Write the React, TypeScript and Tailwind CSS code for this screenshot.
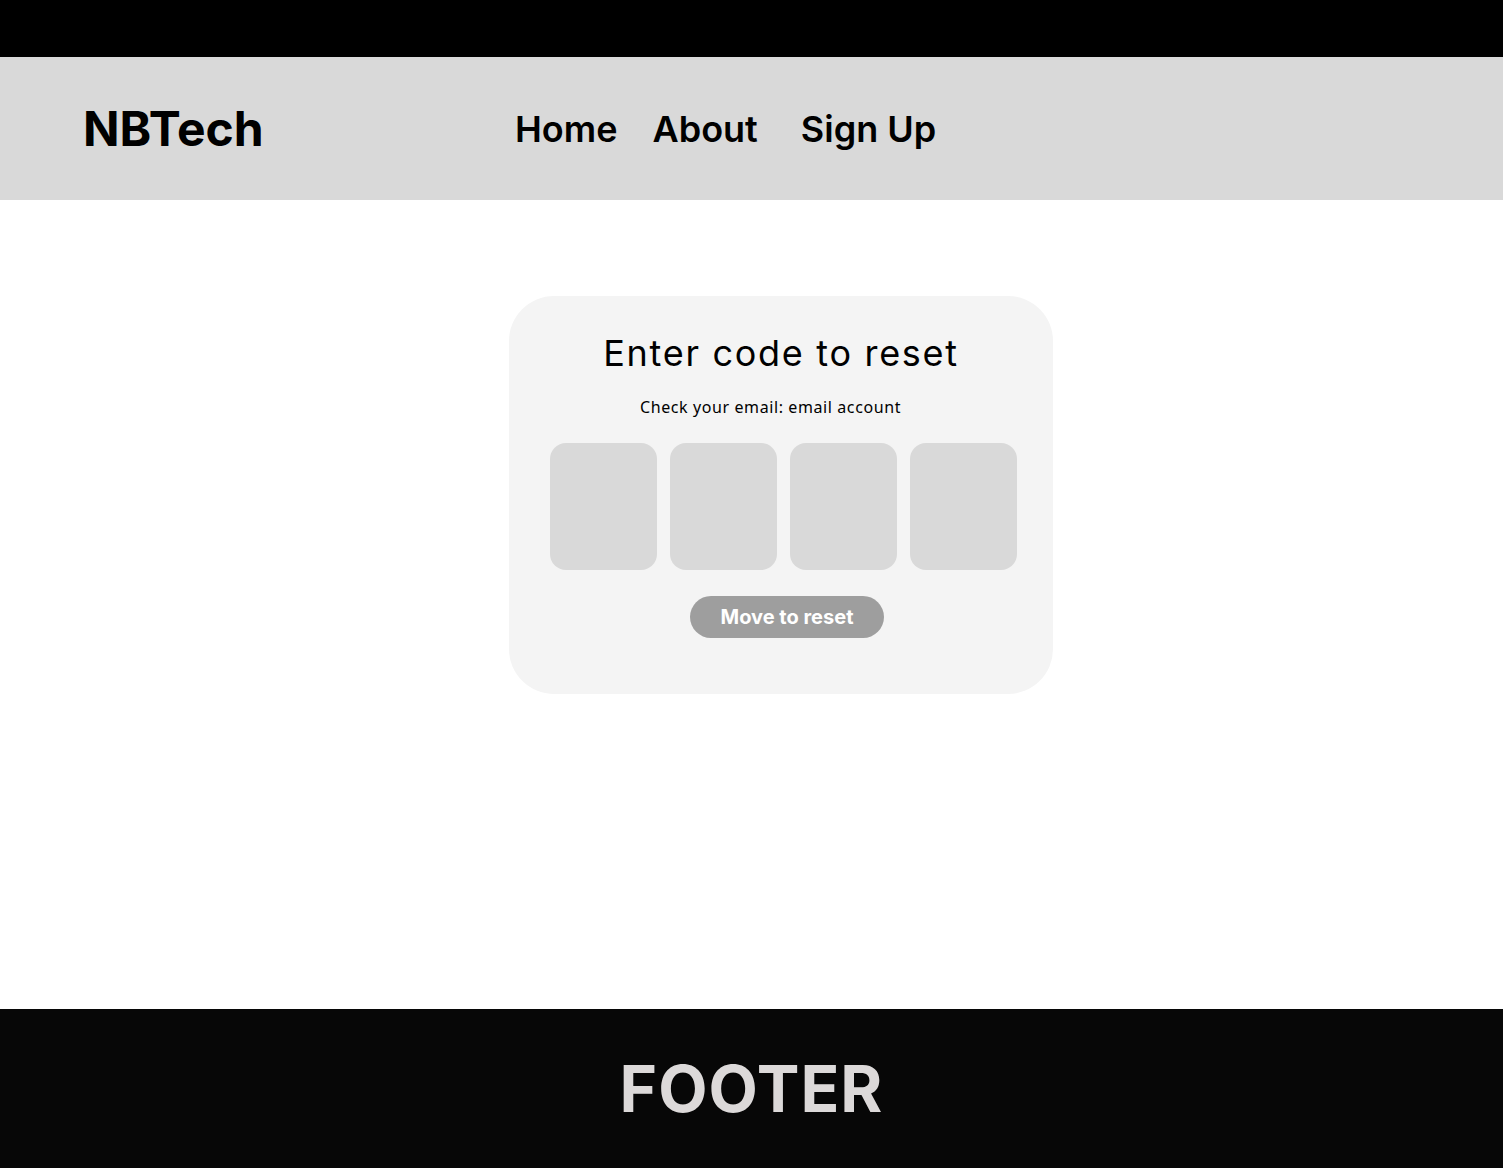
const inter = "font-['Inter',sans-serif]";

function Header() {
  return (
    <header className={`flex h-[143px] items-center bg-[#d9d9d9] ${inter}`}>
      <div className="w-[515px] pl-[83px]">
        <h1 className="text-[48px] leading-none font-bold text-black">NBTech</h1>
      </div>
      <nav className="flex items-center text-[36px] leading-none font-semibold text-black">
        <a className="mr-[35px]">Home</a>
        <a className="mr-[43px]">About</a>
        <a>Sign Up</a>
      </nav>
    </header>
  );
}

function CodeCard() {
  const boxes = [0, 1, 2, 3];
  return (
    <div className="flex h-[398px] w-[544px] flex-col items-center rounded-[45px] bg-[#f4f4f4] pt-[35px]">
      <h2 className={`text-[36px] leading-[44px] font-normal tracking-[1.7px] text-black ${inter}`}>
        Enter code to reset
      </h2>
      <p className="mt-[22px] mr-[21px] font-['Noto_Sans',sans-serif] text-[16px] leading-5 tracking-[0.6px] text-black">
        Check your email: email account
      </p>
      <div className="mt-[26px] ml-[5px] flex gap-[13px]">
        {boxes.map((b) => (
          <input
            key={b}
            maxLength={1}
            className="h-[127px] w-[107px] rounded-[16px] bg-[#d9d9d9] text-center text-4xl outline-none"
          />
        ))}
      </div>
      <button
        className={`mt-[26px] ml-[12px] h-[42px] w-[194px] rounded-full bg-[#9e9e9e] text-[20px] font-bold text-white ${inter}`}
      >
        Move to reset
      </button>
    </div>
  );
}

export default function App() {
  return (
    <div className="flex min-h-screen flex-col bg-white">
      <div className="h-[57px] bg-black" />
      <Header />
      <main className="flex h-[809px] pt-[96px] pl-[509px]">
        <CodeCard />
      </main>
      <footer className={`flex h-[159px] items-center justify-center bg-[#070707] ${inter}`}>
        <p className="text-[64px] leading-none font-bold tracking-[1px] text-[#dcd9d9]">FOOTER</p>
      </footer>
    </div>
  );
}
